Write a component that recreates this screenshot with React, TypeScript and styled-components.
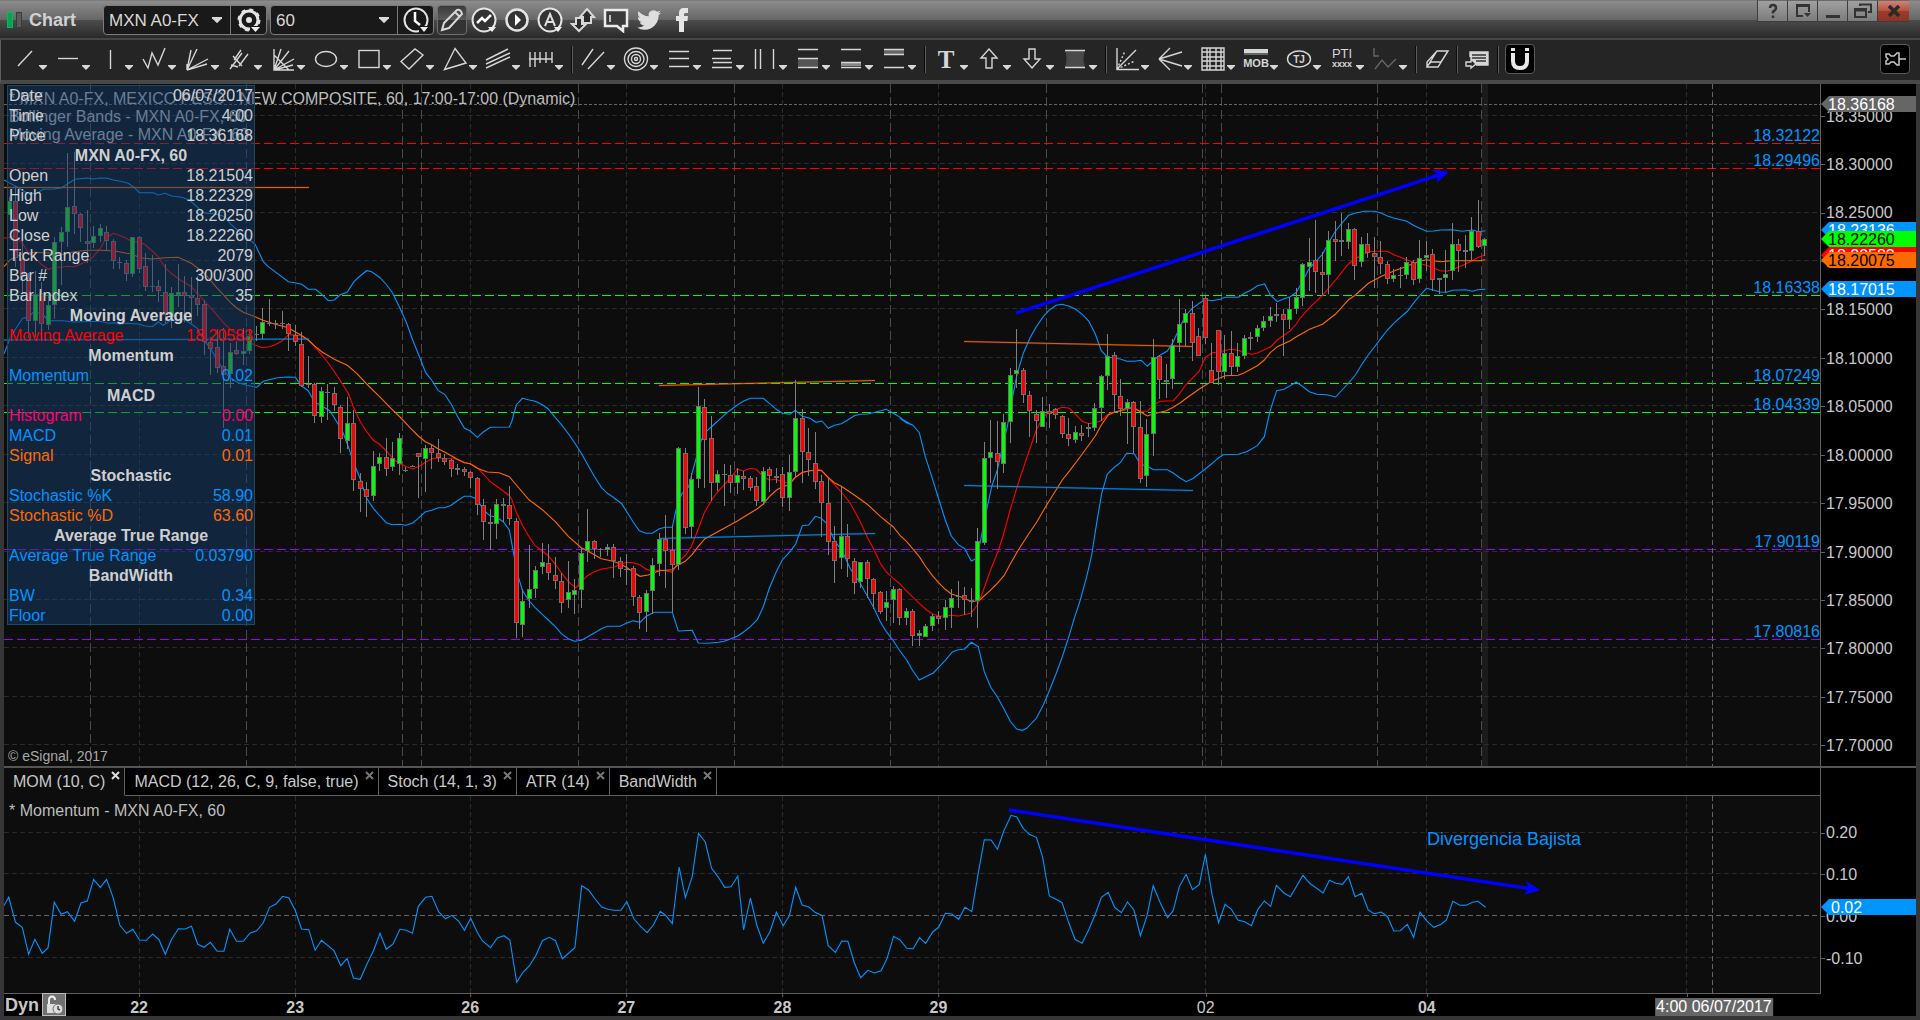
import React from 'react';
import styled, { createGlobalStyle, css } from 'styled-components';

const sans = '"Liberation Sans", Arial, sans-serif';

const GlobalStyle = createGlobalStyle`
  *, *::before, *::after { box-sizing: border-box; }
  html, body { margin: 0; background: #000; }
  body { font-family: ${sans}; font-size: 16px; line-height: 18px; color: #c8c8c8; overflow: hidden; }
  button, select { font-family: inherit; font-size: inherit; }
`;

/* ------------------------------------------------------------------ */
/* Price pane data                                                     */
/* ------------------------------------------------------------------ */

type Kind = 'g' | 'r' | 'd';
type Bar = [Kind, number, number, number, number];

interface Session {
  first: number;
  top: number;
  bars: string;
}

/* Each bar: kind, high, body top, body bottom, low, in thirds of a pixel below `top`. */
const sessions: Session[] = [
  {
    first: 0,
    top: 80,
    bars: `g350,362,406,406 r318,362,533,560 r480,534,590,640 r580,595,722,775 g573,642,722,770 r605,640,732,778
      g640,675,734,750 g470,486,674,718 g442,457,486,614 g218,381,456,501 r216,378,402,462 r398,402,444,487
      r390,483,491,549 g438,468,489,505 g432,444,468,485 r438,457,484,512 r476,484,543,566 d530,546,549,566
      r541,549,581,604 g470,471,581,590 r468,471,566,578 r520,558,620,633 d525,619,622,635 r600,618,632,665
      r552,636,705,733 g621,638,712,743 g553,636,646,680 r588,636,648,725 r592,645,654,728 r588,654,674,708
      r660,672,785,826 r772,785,806,884 r746,801,864,880 r745,858,885,1043 g788,816,882,925 r783,810,821,826
      g745,813,822,855 g746,768,812,822 d738,763,766,784 g684,726,762,776 d657,729,732,738 d720,728,732,746
      d694,728,732,748 r730,732,762,812 r735,765,786,798 r757,792,917,921 d828,911,914,924 r910,912,1007,1028
      g921,934,1010,1028 d912,935,938,1020 r920,940,974,992 r976,980,1076,1120 g950,1030,1082,1106
      r991,1030,1201,1232 r1180,1204,1228,1295 r1206,1226,1250,1310 g1112,1159,1249,1262 g1120,1132,1151,1172
      r1074,1132,1168,1187 g1087,1135,1162,1172 g1060,1075,1151,1185`,
  },
  {
    first: 61,
    top: 360,
    bars: `d320,331,334,336 d315,317,320,322 r278,280,290,413 g256,265,296,396 r252,265,278,327 r237,280,293,306
      r282,294,305,315 r298,300,326,350 d312,325,329,345 r320,327,336,348 r332,337,353,383 r350,355,434,464
      r418,435,486,540 d447,487,491,570 g418,432,491,537 d414,433,437,487 r378,435,477,495 r475,484,788,833
      g688,723,794,830 g556,688,717,743 g618,630,686,714 g549,606,621,642 r552,609,638,660 r591,645,662,687
      r640,663,728,758 g603,696,719,743 g657,690,704,762 g564,579,690,743 g447,543,572,606 r541,543,567,596
      d564,567,571,592 g552,561,570,588 r553,561,602,654 r590,603,626,651 d582,627,631,674 r618,625,710,738
      r705,711,759,807 g690,699,755,815 g595,615,692,761 g519,537,611,648 r465,537,572,684 r495,570,614,756
      g262,265,614,629 r264,279,503,522 g340,357,500,534 g82,139,356,384 r117,142,239,384 r168,235,368,422
      g330,343,368,392 d312,341,345,438 r315,346,368,399 g324,345,368,402 r334,349,356,390 r347,355,383,393
      r352,378,423,438 g322,333,426,435 r322,327,347,396 d324,349,353,369 r320,343,413,441 g284,337,413,453
      g60,175,335,350 r147,175,275,369 r205,277,299,347 r216,310,365,386 r346,363,428,530 r354,430,545,585
      r498,544,602,668 g378,528,593,627 r492,529,596,651 r595,603,668,702 g605,606,665,683 r600,606,656,714
      r655,657,701,747 r692,697,755,762 g693,726,743,783 g678,687,719,788 r684,688,773,795 g744,753,773,795
      r747,753,827,857 g810,820,827,857`,
  },
  {
    first: 141,
    top: 480,
    bars: `g432,438,470,472 g402,408,437,453 r394,408,416,432 g360,381,413,450 g327,354,384,444 d303,348,352,384
      r321,345,359,405 d324,361,365,411 g144,183,363,444`,
  },
  {
    first: 150,
    top: 240,
    bars: `g606,655,908,915 g540,637,654,729 r543,640,665,747 g522,547,671,698 g384,405,546,608 g267,390,402,444
      r385,391,464,489 r453,466,512,591 r510,522,543,608 g471,513,560,561 r492,514,521,564 r504,507,524,537
      r525,529,581,594 r534,583,597,618 g558,576,600,609 r555,580,587,603 d550,562,566,591 g489,505,563,573
      g404,408,503,542 g282,348,407,450 r336,346,464,518 r417,469,506,528 g477,487,506,612 r484,487,560,639
      r483,562,717,729 g537,583,707,741 g297,352,581,648 r345,349,419,477 d372,421,425,474 g297,316,416,447
      g177,253,308,335 g207,219,248,317 r183,220,308,363 r264,289,347,348 r168,175,293,312 r309,391,428,430
      r270,271,395,434 g285,340,395,416 r273,340,380,406 g309,349,380,395 g285,295,347,357 d276,292,296,330
      g255,265,290,306 g228,243,263,272 g201,229,242,261 d189,223,227,245 r207,222,239,348 g171,207,239,266
      g144,171,206,221 g69,72,173,197`,
  },
  {
    first: 200,
    top: 80,
    bars: `g474,546,560,633 r420,541,575,638 r517,576,584,645 g453,481,584,641 r423,478,486,543 d399,481,485,528
      g429,447,486,507 r444,447,557,600 g471,493,546,561 r459,493,518,533 r471,519,530,624 r483,531,551,582
      r543,552,597,612 g567,585,597,605 d560,585,589,624 g531,546,584,597 r541,546,599,614 g480,534,596,609
      g483,525,533,573 r507,522,599,633 d594,595,599,641 g510,582,593,638 g429,492,572,599 r477,492,513,576
      d465,511,515,564 g411,453,513,542 r360,454,500,504 g474,477,497,527`,
  },
];

const parseBars = (text: string): Bar[] =>
  text.trim().split(/\s+/).map((item) => {
    const [a, b, c, d] = item.slice(1).split(',').map(Number);
    return [item[0] as Kind, a, b, c, d];
  });

/* A piece of a curve: origin, x units per pixel, then x,y pairs (y in thirds of a pixel). */
type Piece = [number, number, number, string];

const toPoints = (pieces: Piece[]) =>
  pieces
    .map(([ox, oy, sx, pts]) =>
      pts
        .trim()
        .split(/\s+/)
        .map((p) => {
          const [x, y] = p.split(',').map(Number);
          return `${(ox + x / sx).toFixed(1)},${(oy + y / 3).toFixed(1)}`;
        })
        .join(' '),
    )
    .join(' ');

const upperBand: Piece[] = [
  [0, 80, 3, `12,300 50,320 85,342 110,340 130,328 160,327 184,324 202,312 225,298 260,294 280,297 301,294 322,295
    340,300 358,303 385,310 400,320 418,338 460,338 475,345 495,340 515,348 545,352 568,360 585,375 610,398 650,403
    675,410 690,430 725,462 765,492 790,545 805,560 865,605 885,608 905,613 925,628 947,628 965,643 985,662 1003,660
    1020,645 1042,636 1062,605 1080,588 1100,572 1115,575 1140,593 1160,615 1178,640 1200,685`],
  [400, 360, 3, `20,-110 38,-60 62,0 77,38 97,63 115,92 134,103 154,133 172,168 193,204 211,213 232,232 250,216
    271,202 328,201 335,185 349,135 367,115 388,120 406,124 427,134 445,147 466,173 484,193 505,221 523,247 544,280
    562,312 583,349 604,382 622,400 640,412 665,431 683,460 700,487 718,512 739,520 757,520 778,506 796,502 817,502
    828,450 845,402 856,390 866,380 876,340 887,300 904,240 920,213 937,198 962,175 985,155 1012,135 1030,124
    1051,115 1090,115 1108,130 1129,148 1147,160 1170,163 1186,151 1207,169 1230,175 1248,187 1266,183 1285,205
    1303,196 1324,191 1342,181 1363,167 1381,163 1402,162 1420,158 1459,148 1480,160 1498,170 1519,188 1537,195`],
  [900, 240, 3, `0,535 20,549 38,555 58,578 76,650 97,715 117,780 136,840 154,888 175,914 194,926 214,963 226,957
    240,910 262,800 275,740 292,690 310,610 322,560 340,460 352,400 370,340 391,292 409,260 430,230 448,210 469,196
    487,193 508,199 526,207 547,223 566,243 586,282 604,332 622,351 645,355 661,357 680,364 703,364 724,361 742,379
    758,363 781,345 802,333 820,305 840,260 859,224 877,205 898,190 916,179 937,182 960,178 976,172 1016,172
    1033,160 1054,150 1072,137 1094,132 1111,165 1132,185 1150,177 1171,170 1189,157 1210,120 1228,85 1250,62
    1268,42 1285,10`],
  [1300, 80, 2.529, `90,452 123,406 140,399 165,394 190,394 206,400 221,408 239,415 270,424 290,438 320,454 337,453
    355,450 386,449 410,454 436,450 452,455 469,452`],
];

const lowerBand: Piece[] = [
  [0, 80, 3, `12,822 30,775 48,745 68,715 85,712 100,697 125,700 145,722 190,722 220,726 300,724 325,730 345,728
    358,733 380,730 415,732 436,738 457,740 475,726 490,736 514,720 535,722 553,718 574,732 592,745 605,770 631,805
    652,840 670,870 690,893 715,908 740,916 770,922 790,904 828,894 860,891 886,892 905,918 925,932 943,965 970,980
    990,993 1010,1025 1030,1060 1045,1100 1060,1145 1080,1195 1100,1255 1120,1285 1140,1308 1159,1328 1177,1334`],
  [400, 360, 3, `0,493 18,496 38,489 55,475 75,456 95,451 115,443 134,443 154,436 172,422 193,409 211,409 232,418
    250,450 271,468 289,471 310,485 328,510 340,575 352,640 367,690 385,720 405,742 430,766 445,780 466,800 484,821
    505,836 523,844 544,841 562,831 583,819 604,806 622,799 660,799 680,789 700,782 720,787 739,769 762,757 817,757
    835,813 877,811 895,849 925,850 955,847 973,844 991,837 1012,829 1030,817 1051,800 1072,779 1090,740 1108,685
    1129,635 1147,600 1170,575 1187,552 1207,497 1226,495 1246,469 1262,474 1280,490 1303,540 1330,580 1350,625
    1381,670 1402,708 1420,740 1441,785 1459,815 1480,842 1498,870`],
  [900, 480, 3, `20,540 37,570 58,600 80,589 100,579 136,541 157,516 175,509 194,507 214,487 235,500 253,575 272,622
    292,650 310,683 331,724 350,747 367,751 380,745 409,715 430,675 445,640 469,580 487,530 505,475 523,415 541,360
    560,290 575,225 585,160 595,100 605,40`],
  [900, 240, 3, `622,702 645,680 661,668 680,640 703,641 721,673 742,678 760,689 802,689 820,699 840,714 859,725
    880,715 916,687 937,670 955,654 970,644 1015,643 1040,635 1072,617 1093,590 1111,510 1130,452 1152,448 1171,437
    1189,426 1210,441 1228,455 1250,463 1280,464`],
  [1300, 80, 2.529, `90,951 123,909 140,885 155,856 173,824 190,798 206,773 221,750 239,728 272,693 290,665 304,645
    320,625 337,630 355,636 370,637 386,631 419,629 436,634 450,629 469,628`],
];

const fastAverage: Piece[] = [
  [0, 80, 3, `12,475 48,468 67,490 85,517 106,535 124,553 145,568 163,562 184,562 202,559 223,560 241,553 263,543
    280,530 301,505 319,474 340,460 358,466 379,475 397,486 418,485 436,495 457,513 475,530 496,563 514,580 535,596
    553,607 574,620 592,640 613,663 640,692 670,728 691,748 709,760 730,773 748,787 765,795 787,803 808,800 826,794
    847,782 865,765 886,764 904,768 925,780 943,799 978,840 1000,870 1021,902 1045,940 1060,980 1081,1025 1100,1055
    1120,1081 1138,1092 1159,1113 1180,1137`],
  [400, 360, 3, `0,311 20,320 38,327 60,318 76,307 95,297 115,293 134,296 160,294 175,299 193,307 211,311 232,323
    250,342 271,365 289,378 310,393 328,407 335,418 349,457 367,495 388,532 406,557 427,573 445,587 466,613 484,638
    505,665 527,684 545,665 562,647 583,635 604,628 625,624 645,620 661,613 680,607 700,608 720,615 739,628 757,634
    780,630 800,633 817,637 835,605 856,587 874,560 890,520 913,458 934,422 952,397 973,374 991,355 1012,327
    1030,333 1051,325 1069,328 1090,350 1108,360 1129,358 1150,368 1168,368 1186,352 1207,338 1230,332 1255,328
    1266,333 1285,355 1303,373 1324,396 1350,428 1381,485 1402,532 1420,565 1441,610 1459,636 1480,655 1498,670`],
  [900, 480, 3, `19,332 37,350 58,370 80,390 97,401 115,408 136,408 154,406 175,408 193,404 214,399 232,375 245,345
    271,272 295,212 310,165 331,88 358,0`],
  [900, 240, 3, `385,640 409,570 430,530 448,517 469,508 487,502 508,505 526,522 547,544 566,551 590,547 604,542
    625,522 643,515 664,514 690,505 721,514 742,514 760,496 780,484 820,482 838,462 859,433 877,415 898,393 916,352
    937,338 960,335 990,328 1015,331 1033,337 1054,343 1072,339 1093,329 1111,321 1132,300 1150,287 1171,272
    1189,252`],
  [1300, 80, 2.529, `0,715 24,683 57,646 90,600 123,551 140,537 155,525 173,516 190,514 221,514 239,525 260,535
    287,547 320,556 337,563 355,572 370,574 386,569 403,560 419,552 452,532 469,524`],
];

const slowAverage: Piece[] = [
  [0, 80, 3, `12,560 30,540 48,531 67,521 106,517 124,518 163,520 184,524 223,515 263,511 301,511 345,513 379,520
    397,522 418,533 457,537 496,533 535,532 553,540 574,550 592,563 613,580 631,600 652,625 670,644 691,667 709,683
    730,697 765,710 787,720 826,733 865,743 886,756 904,766 925,780 943,797 965,815 1003,838 1042,856 1070,880
    1100,912 1138,949 1170,982`],
  [400, 360, 3, `0,171 30,203 55,228 76,245 95,254 115,267 134,276 154,287 172,298 193,308 211,311 232,325 262,336
    298,338 328,350 349,375 388,420 427,449 466,485 505,529 544,563 562,572 583,584 604,596 640,604 661,612 679,622
    700,636 720,649 745,645 778,632 817,629 835,614 856,604 877,583 895,559 915,536 952,516 1012,483 1051,459
    1072,446 1090,432 1108,410 1129,391 1147,380 1168,374 1186,352 1207,337 1230,332 1264,331 1285,352 1303,368
    1324,379 1363,405 1402,433 1441,469 1480,501`],
  [900, 480, 3, `0,166 20,185 58,230 76,258 97,286 115,307 136,328 154,342 175,348 193,355 217,366 240,359 271,331
    290,312 312,287 331,252 355,210 388,159 409,128 442,72 487,0`],
  [900, 240, 3, `509,692 547,642 586,588 604,555 625,525 643,517 664,511 682,504 703,503 721,515 742,528 760,522
    799,512 820,502 840,489 859,475 898,447 937,423 976,407 1015,406 1033,398 1072,377 1093,360 1111,338 1132,320
    1171,302 1189,290`],
  [1300, 80, 2.529, `0,764 24,748 57,733 90,702 123,659 140,645 173,610 206,589 239,572 272,558 287,550 304,543
    320,539 355,545 386,542 453,542 469,539`],
];

const momentum: Piece[] = [
  [0, 740, 2.063, `8,497 18,472 32,547 46,562 59,643 72,598 87,640 99,624 112,487 126,523 139,515 154,544 167,489
    180,483 193,418 207,442 220,418 234,475 247,555 261,580 274,568 288,600 302,601 315,582 328,599 341,643 354,598
    368,566 382,567 395,559 408,613 421,622 434,607 448,634 462,634 474,568 488,604 502,604 516,579 529,573 543,549
    556,502 570,491 583,469 596,474 609,511 622,567 637,569 650,631 663,601 689,632 703,677 716,655 729,714 743,718
    757,673 771,631 784,580 797,628 811,612 825,568 838,571 851,580 863,499 878,472 891,469 905,516 919,536 932,526
    946,543 958,571 971,535 985,578 995,602 1012,623 1026,594 1040,587 1052,600 1066,727 1079,697 1092,678 1105,648
    1119,602 1133,592 1146,602 1160,656 1186,623 1200,437 1214,450 1228,477 1241,501 1254,508 1267,511 1281,511
    1293,485 1308,537 1322,560 1335,578 1348,555 1362,514 1374,527 1387,551 1401,381 1414,473 1428,410 1441,280
    1455,306 1468,385 1482,412 1495,442 1508,440 1522,408 1534,570`],
  [740, 740, 2.8, `29,474 47,555 65,610 84,575 102,517 121,557 138,527 156,442 174,495 193,501 210,517 230,527
    247,617 267,637 285,603 302,604 320,668 338,713 358,691 376,699 395,692 412,655 430,589 448,600 467,625 485,626
    503,593 520,610 540,575 556,562 575,520 593,522 612,538 630,502 649,515 667,400 684,299 703,300 721,328 739,272
    759,226 775,231 793,265 810,283 830,292 847,350 866,468 885,478 902,488 920,547 938,598 958,610 976,570 994,525
    1012,472 1031,457 1049,502 1068,518 1085,486 1103,510 1121,587 1139,530 1157,437 1176,487 1197,533 1213,512
    1230,440 1249,403 1267,449 1286,434 1303,343 1322,465 1340,548 1358,493 1376,508 1394,540 1413,545 1432,557
    1450,508 1468,483 1486,499 1502,436 1523,459 1541,470`],
  [1260, 740, 2.376, `102,406 118,430 150,459 165,421 180,430 196,433 210,410 226,470 242,460 257,510 271,521
    288,516 303,530 318,573 333,572 350,553 365,592 380,517 398,545 413,562 430,553 443,540 458,484 475,496 490,496
    505,487 518,484 536,502`],
];

const plot = { left: 4, width: 1816, priceTop: 84, priceHeight: 682, momTop: 796, momHeight: 197 };

const priceTicks = [115, 163, 212, 260, 308, 357, 405, 454, 502, 551, 599, 647, 696, 744].map((y, i) => ({
  y,
  text: (18.35 - i * 0.05).toFixed(5),
}));
const momentumTicks = [
  { y: 832, text: '0.20' },
  { y: 873, text: '0.10' },
  { y: 915, text: '0.00' },
  { y: 957, text: '-0.10' },
];
const days = [
  { x: 139, text: '22' },
  { x: 295, text: '23' },
  { x: 470, text: '26' },
  { x: 626, text: '27' },
  { x: 782, text: '28' },
  { x: 938, text: '29' },
  { x: 1205, text: '02', light: true },
  { x: 1426, text: '04' },
  { x: 1686, text: '' },
];
const sessionBreaks = [90, 246, 402, 421, 578, 734, 890, 1046, 1202, 1221, 1377, 1481];
const crosshair = { x: 1712, y: 104 };

const levels = [
  { y: 143, text: '18.32122', color: '#ff0000' },
  { y: 168, text: '18.29496', color: '#ff0000' },
  { y: 295, text: '18.16338', color: '#00ff00' },
  { y: 383, text: '18.07249', color: '#00ff00' },
  { y: 412, text: '18.04339', color: '#00ff00' },
  { y: 549, text: '17.90119', color: '#9a00ff' },
  { y: 639, text: '17.80816', color: '#9a00ff' },
];

const priceTags = [
  { y: 104, text: '18.36168', bg: '#666666', fg: '#ffffff' },
  { y: 230, text: '18.23136', bg: '#0094ff', fg: '#ffffff' },
  { y: 255, text: '18.20583', bg: '#ff0000', fg: '#ffffff' },
  { y: 239, text: '18.22260', bg: '#00ff00', fg: '#000000' },
  { y: 260, text: '18.20075', bg: '#ff6a00', fg: '#000000' },
  { y: 289, text: '18.17015', bg: '#0094ff', fg: '#ffffff' },
];

const blue = '#0094ff';
const orange = '#ff6a00';
const readings: { label: string; value?: string; color?: string }[] = [
  { label: 'Date', value: '06/07/2017' },
  { label: 'Time', value: '4:00' },
  { label: 'Price', value: '18.36168' },
  { label: 'MXN A0-FX, 60' },
  { label: 'Open', value: '18.21504' },
  { label: 'High', value: '18.22329' },
  { label: 'Low', value: '18.20250' },
  { label: 'Close', value: '18.22260' },
  { label: 'Tick Range', value: '2079' },
  { label: 'Bar #', value: '300/300' },
  { label: 'Bar Index', value: '35' },
  { label: 'Moving Average' },
  { label: 'Moving Average', value: '18.20583', color: '#ff0000' },
  { label: 'Momentum' },
  { label: 'Momentum', value: '0.02', color: blue },
  { label: 'MACD' },
  { label: 'Histogram', value: '0.00', color: '#ff006e' },
  { label: 'MACD', value: '0.01', color: blue },
  { label: 'Signal', value: '0.01', color: orange },
  { label: 'Stochastic' },
  { label: 'Stochastic %K', value: '58.90', color: blue },
  { label: 'Stochastic %D', value: '63.60', color: orange },
  { label: 'Average True Range' },
  { label: 'Average True Range', value: '0.03790', color: blue },
  { label: 'BandWidth' },
  { label: 'BW', value: '0.34', color: blue },
  { label: 'Floor', value: '0.00', color: blue },
];

/* ------------------------------------------------------------------ */
/* Styled parts                                                        */
/* ------------------------------------------------------------------ */

const Window = styled.div`
  display: flex;
  flex-direction: column;
  height: 100vh;
  min-height: 600px;
  background: #000;
`;

const TitleBar = styled.header`
  display: flex;
  align-items: flex-start;
  height: 40px;
  flex: none;
  padding-left: 7px;
  padding-right: 11px;
  border-bottom: 2px solid #454545;
  background: linear-gradient(#6a6a6a 0, #8c8c8c 1px, #666 20px, #4c4c4c 20px, #292929 38px);
`;

const Brand = styled.h1`
  display: flex;
  align-items: center;
  gap: 7px;
  width: 96px;
  height: 40px;
  margin: 0;
  font-size: 18px;
  line-height: 20px;
  color: #d2d2d2;
`;

const Field = styled.div<{ $width: number }>`
  display: flex;
  width: ${(p) => p.$width}px;
  height: 30px;
  margin: 5px 3px 0 0;
  border: 1px solid #7b7b7b;
  border-radius: 4px;
  background: #191919;
`;

const Picker = styled.label`
  position: relative;
  display: flex;
  flex: 1;
  align-items: center;

  svg {
    position: absolute;
    right: 8px;
    pointer-events: none;
  }
`;

const Select = styled.select`
  appearance: none;
  width: 100%;
  height: 28px;
  padding: 0 24px 0 5px;
  border: 0;
  background: transparent;
  color: #d8d8d8;
  font-size: 17px;
`;

const FieldButton = styled.button`
  display: flex;
  align-items: center;
  justify-content: center;
  width: 36px;
  padding: 0;
  border: 0;
  border-left: 1px solid #7b7b7b;
  background: transparent;
`;

const TitleButton = styled.button<{ $pressed?: boolean }>`
  display: flex;
  align-items: center;
  justify-content: center;
  width: ${(p) => (p.$pressed ? 30 : 33)}px;
  height: 30px;
  margin-top: 5px;
  padding: 0;
  border: 1px solid ${(p) => (p.$pressed ? '#6e6e6e' : 'transparent')};
  border-radius: 4px;
  background: ${(p) => (p.$pressed ? 'linear-gradient(#3a3a3a, #5a5a5a 50%, #333 50%)' : 'transparent')};
`;

const Spacer = styled.div`
  flex: 1;
`;

const WindowButton = styled.button<{ $close?: boolean }>`
  display: flex;
  align-items: center;
  justify-content: center;
  width: ${(p) => (p.$close ? 32 : 30)}px;
  height: 22px;
  padding: 0;
  border: 1px solid #3c3c3c;
  border-top-color: #6a6a6a;
  border-right-width: 0;
  background: ${(p) =>
    p.$close ? 'linear-gradient(#cf8476, #b5503f 50%, #a33a28 50%, #8a3426)' : 'linear-gradient(#a0a0a0, #7c7c7c)'};
`;

const Toolbar = styled.div`
  display: flex;
  align-items: center;
  flex: none;
  height: 44px;
  padding: 0 10px 2px;
  border-left: 1px solid #606060;
  border-bottom: 4px solid #494949;
  background: #252525;
`;

const Tool = styled.button<{ $compact?: boolean }>`
  display: flex;
  align-items: center;
  flex: none;
  width: ${(p) => (p.$compact ? 32 : 43)}px;
  height: 32px;
  padding: 0;
  border: 0;
  background: transparent;
`;

const Divider = styled.span`
  flex: none;
  width: 2px;
  height: 27px;
  margin: 0 6px 0 1px;
  border-left: 1px solid #0c0c0c;
  border-right: 1px solid #5c5c5c;
`;

const BoxedTool = styled.button`
  display: flex;
  align-items: center;
  justify-content: center;
  flex: none;
  width: 30px;
  height: 30px;
  padding: 0;
  border: 1px solid #5a5a5a;
  border-radius: 4px;
  background: #000;
`;

const Workspace = styled.main`
  display: flex;
  flex: 1;
  flex-direction: column;
  min-height: 0;
  border: 4px solid #363636;
  border-top: 0;
`;

const Pane = styled.section<{ $grow: number }>`
  display: flex;
  flex: ${(p) => p.$grow} 1 0;
  min-height: 0;
`;

const Plot = styled.div`
  position: relative;
  flex: 1;
  min-width: 0;
  background: #0d0d0d;
  overflow: hidden;
`;

const Canvas = styled.svg`
  display: block;
  width: 100%;
  height: 100%;
`;

const Axis = styled.div`
  position: relative;
  flex: none;
  width: 96px;
  border-left: 1px solid #606060;
  background: #000;
  overflow: hidden;
`;

const AxisLabel = styled.span`
  position: absolute;
  left: 0;
  display: flex;
  align-items: center;
  height: 18px;
  margin-top: -8px;
  padding-top: 1px;
  color: #c8c8c8;

  &::before {
    content: '';
    width: 4px;
    height: 1px;
    margin-right: 1px;
    background: #606060;
  }
`;

const AxisTag = styled.span<{ $bg: string; $fg: string; $wide?: boolean }>`
  position: absolute;
  left: 0;
  right: 0;
  height: 16px;
  margin-top: -8px;
  padding-left: ${(p) => (p.$wide ? 10 : 7)}px;
  line-height: 17px;
  clip-path: polygon(0 50%, 8px 0, 100% 0, 100% 100%, 8px 100%);
  background: ${(p) => p.$bg};
  color: ${(p) => p.$fg};
`;

const LevelLabel = styled.span`
  position: absolute;
  right: 0;
  height: 18px;
  margin-top: -16px;
  color: ${blue};
`;

const Studies = styled.ul`
  position: absolute;
  top: 6px;
  left: 5px;
  margin: 0;
  padding: 0;
  list-style: none;
  white-space: nowrap;
  color: #bdbdbd;
`;

const Copyright = styled.small`
  position: absolute;
  bottom: 2px;
  left: 4px;
  font-size: 14px;
  line-height: 16px;
  color: #a8a8a8;
`;

const DataWindow = styled.dl`
  position: absolute;
  top: 1px;
  left: 3px;
  width: 248px;
  margin: 0;
  border: 1px solid #1f4a5e;
  background: rgba(21, 61, 109, 0.5);
`;

const Reading = styled.div<{ $color?: string; $heading?: boolean }>`
  display: flex;
  justify-content: ${(p) => (p.$heading ? 'center' : 'space-between')};
  height: 20px;
  padding: 0 1px;
  line-height: 20px;
  color: ${(p) => p.$color ?? '#cfcfcf'};
  ${(p) =>
    p.$heading &&
    css`
      font-weight: bold;
    `}

  &:last-child {
    height: 18px;
  }

  dd {
    margin: 0;
  }
`;

const PaneDivider = styled.div`
  flex: none;
  height: 2px;
  background: #555;
`;

const TabStrip = styled.div`
  display: flex;
  flex: none;
  height: 28px;
  background: #000;
`;

const Tabs = styled.div`
  display: flex;
  flex: 1;
  border-right: 1px solid #606060;
`;

const TabRest = styled.div`
  flex: 1;
  border-bottom: 1px solid #606060;
`;

const TabCorner = styled.div`
  width: 95px;
`;

const Tab = styled.div<{ $active?: boolean }>`
  display: flex;
  gap: 6px;
  padding: 0 4px 0 9px;
  border-right: 1px solid #606060;
  border-bottom: 1px solid ${(p) => (p.$active ? '#0d0d0d' : '#606060')};
  background: ${(p) => (p.$active ? '#0d0d0d' : '#000')};
`;

const TabButton = styled.button`
  padding: 1px 0 0;
  border: 0;
  background: transparent;
  color: #c8c8c8;
  white-space: nowrap;
`;

const CloseTab = styled.button`
  width: 9px;
  height: 9px;
  margin-top: 3px;
  padding: 0;
  border: 0;
  background: transparent;

  svg {
    display: block;
  }
`;

const Annotation = styled.span`
  position: absolute;
  font-size: 18px;
  line-height: 20px;
  white-space: nowrap;
  color: ${blue};
`;

const TimeRow = styled.footer`
  display: flex;
  flex: none;
  height: 23px;
  background: #000;
`;

const TimeScale = styled.div`
  position: relative;
  flex: 1;
  border-top: 1px solid #606060;
`;

const TimeLabel = styled.span<{ $light?: boolean }>`
  position: absolute;
  top: 0;
  padding-top: 5px;
  transform: translateX(-50%);
  font-weight: ${(p) => (p.$light ? 'normal' : 'bold')};
  line-height: 18px;

  &::before {
    content: '';
    position: absolute;
    top: 0;
    left: 50%;
    width: 1px;
    height: 3px;
    background: #606060;
  }
`;

const TimeTag = styled.span`
  position: absolute;
  top: 4px;
  height: 18px;
  padding: 0 1px;
  transform: translateX(-50%);
  background: #666;
  color: #fff;
  white-space: nowrap;
`;

const Mode = styled.div`
  position: absolute;
  top: -1px;
  left: 1px;
  display: flex;
  gap: 3px;
  font-size: 18px;
  font-weight: bold;
  line-height: 24px;
`;

const LockButton = styled.button`
  width: 24px;
  height: 23px;
  padding: 0;
  border: 1px solid #bbb;
  background: #707070;

  svg {
    display: block;
  }
`;

/* ------------------------------------------------------------------ */
/* Icons                                                               */
/* ------------------------------------------------------------------ */

const Caret = ({ size = 8 }: { size?: number }) => (
  <svg width={size} height={size * 0.625} viewBox="0 0 8 5" aria-hidden="true">
    <path d="M0 0H8V1L4 5 0 1Z" fill="#d8d8d8" />
  </svg>
);

const ToolCaret = styled.span`
  display: flex;
  margin-top: 17px;
`;

const Glyph = ({ children }: { children: React.ReactNode }) => (
  <svg width="28" height="28" viewBox="0 0 28 28" fill="none" stroke="#d6d6d6" strokeWidth="1.4" aria-hidden="true">
    {children}
  </svg>
);

const tiny = { fill: '#d6d6d6', stroke: 'none', fontFamily: sans, textAnchor: 'middle' as const };

const toolGroups: [string, React.ReactNode][][] = [
  [
    ['Line', <path d="M7 21 21 6" />],
    ['Horizontal line', <path d="M4 13.5H24" />],
    ['Vertical line', <path d="M13.5 5V24" />],
    ['Zigzag', <path d="M3 14 8 23 12 8 18 20 25 3" />],
    ['Fan', <path d="M4 25 8 5M4 25 14 4M4 25 25 14M4 25 24 19M4 25V19" />],
    ['Pitchfork', <path d="M4 24 16 8M7 11 16 21M8 15 15 5M13 21 22 9M5 20l7 2" />],
    ['Gann fan', <path d="M5 4V25H25M5 25 12 4M5 25 20 6M5 25 25 14M5 25 24 20M5 10 20 25" />],
    ['Ellipse', <ellipse cx="14" cy="14" rx="10.5" ry="7.5" />],
    ['Rectangle', <rect x="4" y="5.5" width="20" height="17" />],
    ['Diamond', <path d="M3 16.5 17 4 25 10 11 24Z" />],
    ['Triangle', <path d="M14 3.5 25 18 3.5 24.5Z" />],
    ['Parallel channel', <path d="M2 15 24 4M2 19 26 8M2 23 26 12" />],
    ['Time cycles', <path d="M3 7V22M8 7V22M13 7V18M19 7V18M25 7V18M2 14H25" />],
  ],
  [
    ['Parallel lines', <path d="M3 20 14 4M9 24 25 7" />],
    [
      'Fibonacci circles',
      <>
        <ellipse cx="14" cy="14" rx="11.5" ry="11" />
        <ellipse cx="14" cy="14" rx="8" ry="7.5" />
        <ellipse cx="14" cy="14" rx="4.5" ry="4.5" />
        <ellipse cx="14" cy="14" rx="1.5" ry="1.5" />
      </>,
    ],
    ['Retracement', <path d="M4 6.5H24M4 13.5H24M4 21.5H24" />],
    ['Extension', <path d="M5 5.5H24M4 13.5H23M5 17.5H24M4 22.5H24" />],
    ['Time zones', <path d="M4.5 4V24M9.5 4V24M22.5 4V24" />],
    ['Level one', <><path d="M4 14H24V23H4Z" fill="#555" stroke="none" /><path d="M4 4.5H24M4 13.5H24M4 22.5H24" /></>],
    ['Level two', <><path d="M4 17H24V21H4Z" fill="#888" stroke="none" /><path d="M4 4.5H24M4 17.5H24M4 22.5H24" /></>],
    ['Level three', <><path d="M4 5H24V9H4Z" fill="#666" stroke="none" /><path d="M4 4.5H24M4 9.5H24M4 22.5H24" /></>],
  ],
  [
    ['Text', <text x="14" y="23" fontSize="25" fill="#d6d6d6" stroke="none" textAnchor="middle" fontWeight="bold" fontFamily='"Liberation Serif", serif'>T</text>],
    ['Arrow up', <path d="M14 4 22 13H17V23H11V13H6Z" />],
    ['Arrow down', <path d="M14 23 22 14H17V4H11V14H6Z" />],
    ['Box', <><path d="M4 5.5H24Q21 14 24 22.5H4Q7 14 4 5.5Z" fill="#4a4a4a" stroke="none" /><path d="M4 5.5H24M4 22.5H24" /></>],
  ],
  [
    ['Speed lines', <><path d="M4 3V24.5H26M4 24 23 5" /><path d="M4 24 12 6M4 24 22 16" strokeDasharray="2 2" /></>],
    ['Rays', <path d="M3 14 14 3M3 14 26 7M3 14 26 21M3 14 14 25" />],
    ['Grid', <path d="M3 3H25V25H3ZM8 3V25M11 3V25M17 3V25M22 3V25M3 7H25M3 12H25M3 16H25M3 21H25" />],
    ['MOB', <><path d="M2 4H26V8H2Z" fill="#d6d6d6" stroke="none" /><path d="M2 8H26V10H2Z" fill="#666" stroke="none" /><text x="14" y="22" fontSize="11" fontWeight="bold" {...tiny}>MOB</text></>],
    ['TJ', <><ellipse cx="14" cy="14" rx="11.5" ry="8" /><text x="14" y="18" fontSize="10" fontWeight="bold" {...tiny}>TJ</text></>],
    ['PTI', <><text x="14" y="13" fontSize="13" {...tiny}>PTI</text><text x="14" y="22" fontSize="9" fontWeight="bold" {...tiny}>xxxx</text></>],
    ['Label', <g stroke="#666"><path d="M3 3V11H8M4 24 11 15 17 22 25 14" /></g>],
  ],
];

const Drawings = ({ top, height, children }: { top: number; height: number; children: React.ReactNode }) => (
  <Canvas viewBox={`${plot.left} ${top} ${plot.width} ${height}`} preserveAspectRatio="none" aria-hidden="true">
    {children}
  </Canvas>
);

const Rule = ({ x, y, ...rest }: { x?: number; y?: number } & React.SVGProps<SVGPathElement>) => (
  <path
    d={x !== undefined ? `M${x + 0.5} ${plot.priceTop}V${plot.momTop + plot.momHeight}` : `M4 ${(y ?? 0) + 0.5}H1820`}
    fill="none"
    shapeRendering="crispEdges"
    {...rest}
  />
);

const TrendLine = ({ d, color }: { d: string; color: string }) => (
  <g fill="none" stroke={color}>
    <path d={d} strokeWidth="2" opacity="0.25" />
    <path d={d} opacity="0.85" />
  </g>
);

const Arrow = ({ x1, y1, x2, y2 }: { x1: number; y1: number; x2: number; y2: number }) => {
  const angle = (Math.atan2(y2 - y1, x2 - x1) * 180) / Math.PI;
  return (
    <g stroke="#0000ff" fill="#0000ff">
      <path d={`M${x1} ${y1}L${x2 - 4} ${y2 - ((y2 - y1) / (x2 - x1)) * 4}`} strokeWidth="3.5" />
      <path d="M0 0L-13-6-10 0-13 6Z" transform={`translate(${x2} ${y2}) rotate(${angle})`} />
    </g>
  );
};

const Candles = () => (
  <g shapeRendering="crispEdges">
    {sessions.flatMap(({ first, top, bars }) =>
      parseBars(bars).map(([kind, hi, bodyTop, bodyBottom, lo], i) => {
        const x = Math.floor(9 + 6.5 * (first + i));
        const y = (v: number) => Math.round(top + v / 3);
        const bt = y(bodyTop);
        const bb = Math.max(y(bodyBottom), bt + 1);
        return (
          <g key={first + i}>
            <rect x={x} y={y(hi)} width={1} height={Math.max(1, y(lo) - y(hi))} fill="#808080" />
            <rect x={x - 2} y={bt} width={5} height={bb - bt} fill="#707070" />
            {kind !== 'd' && (
              <rect x={x - 1} y={bt + 1} width={3} height={Math.max(1, bb - bt - 2)} fill={kind === 'g' ? '#00ff00' : '#ff0000'} />
            )}
          </g>
        );
      }),
    )}
  </g>
);

const pct = (value: number, origin: number, size: number) => `${((value - origin) / size) * 100}%`;

export default function App() {
  const line = { fill: 'none', strokeWidth: 1.1 };
  return (
    <Window>
      <GlobalStyle />
      <TitleBar>
        <Brand>
          <svg width="15" height="18" viewBox="0 0 15 18" aria-hidden="true">
            <rect x="0.5" y="1.5" width="5" height="15" fill="#00a550" stroke="#12b060" />
            <rect x="9.5" y="1.5" width="5" height="15" fill="#5a5a5a" stroke="#3a3a3a" />
          </svg>
          Chart
        </Brand>
        <Field $width={164}>
          <Picker>
            <Select aria-label="Symbol" defaultValue="MXN A0-FX">
              <option>MXN A0-FX</option>
            </Select>
            <Caret size={10} />
          </Picker>
          <FieldButton aria-label="Symbol settings">
            <svg width="26" height="26" viewBox="0 0 26 26" fill="none" aria-hidden="true">
              <circle cx="13" cy="13" r="9" stroke="#e4e4e4" strokeWidth="3" />
              <circle cx="13" cy="13" r="10.5" stroke="#e4e4e4" strokeWidth="2" strokeDasharray="4 4.25" />
              <circle cx="13" cy="13" r="3" fill="#e4e4e4" />
              <path d="M14 19H25V26H14Z" fill="#191919" />
              <path d="M15 20H24L19.5 25Z" fill="#f0f0f0" />
            </svg>
          </FieldButton>
        </Field>
        <Field $width={164}>
          <Picker>
            <Select aria-label="Interval" defaultValue="60">
              <option>60</option>
            </Select>
            <Caret size={10} />
          </Picker>
          <FieldButton aria-label="Time template">
            <svg width="26" height="26" viewBox="0 0 26 26" fill="none" aria-hidden="true">
              <circle cx="13" cy="13" r="11.5" stroke="#e4e4e4" strokeWidth="2" />
              <path d="M12 5V14L17 18" stroke="#fff" strokeWidth="2.5" />
              <path d="M16 19H26V26H16Z" fill="#191919" />
              <path d="M17 20H25L21 25Z" fill="#f0f0f0" />
            </svg>
          </FieldButton>
        </Field>
        <TitleButton $pressed aria-label="Drawing tools">
          <svg width="26" height="26" viewBox="0 0 26 26" fill="none" stroke="#d8d8d8" strokeWidth="2" aria-hidden="true">
            <path d="M3 23 5 16 18 3Q22 2 23 7L10 21ZM16 5 21 10" />
          </svg>
        </TitleButton>
        <TitleButton aria-label="Studies">
          <svg width="26" height="26" viewBox="0 0 26 26" fill="none" aria-hidden="true">
            <circle cx="13" cy="13" r="11.5" stroke="#e4e4e4" strokeWidth="2" fill="#333" />
            <path d="M6 16 11 11 14 14 20 8" stroke="#fff" strokeWidth="2.5" />
            <path d="M17 20H25L21 25Z" fill="#f0f0f0" />
          </svg>
        </TitleButton>
        <TitleButton aria-label="Play">
          <svg width="26" height="26" viewBox="0 0 26 26" fill="none" aria-hidden="true">
            <circle cx="13" cy="13" r="10.5" stroke="#e4e4e4" strokeWidth="2.5" fill="#333" />
            <path d="M11 7 17 13 11 19Z" fill="#fff" />
          </svg>
        </TitleButton>
        <TitleButton aria-label="Alerts">
          <svg width="26" height="26" viewBox="0 0 26 26" fill="none" aria-hidden="true">
            <circle cx="13" cy="13" r="11.5" stroke="#e4e4e4" strokeWidth="2" fill="#333" />
            <path d="M8 19 13 7 18 19M10 15H16" stroke="#ddd" strokeWidth="2" />
            <path d="M17 20H25L21 25Z" fill="#f0f0f0" />
          </svg>
        </TitleButton>
        <TitleButton aria-label="Trade">
          <svg width="26" height="26" viewBox="0 0 26 26" fill="#2b2b2b" stroke="#d8d8d8" strokeWidth="2" aria-hidden="true">
            <path d="M17 2 24 10H21V16H13V10H10Z" />
            <path d="M6 11H12V17H16L9 24 2 17H6Z" />
          </svg>
        </TitleButton>
        <TitleButton aria-label="Notes">
          <svg width="26" height="26" viewBox="0 0 26 26" fill="#3a3a3a" stroke="#ececec" strokeWidth="2.5" aria-hidden="true">
            <path d="M2 3H24V19H20V24L14 19H2Z" />
            <path d="M7 8V15" strokeWidth="1.5" />
          </svg>
        </TitleButton>
        <TitleButton aria-label="Twitter">
          <svg width="24" height="24" viewBox="0 0 24 24" fill="#dedede" aria-hidden="true">
            <path d="M23.95 4.57a10 10 0 01-2.82.77 4.96 4.96 0 002.16-2.72c-.95.56-2 .96-3.13 1.18a4.92 4.92 0 00-8.38 4.48C7.69 8.09 4.07 6.13 1.64 3.16a4.82 4.82 0 00-.67 2.48c0 1.71.87 3.21 2.19 4.1a4.9 4.9 0 01-2.23-.62v.06a4.92 4.92 0 003.95 4.83 5 5 0 01-2.21.08 4.94 4.94 0 004.6 3.42A9.87 9.87 0 010 19.54a13.99 13.99 0 007.56 2.21c9.05 0 14-7.5 14-13.98 0-.21 0-.42-.02-.63a9.94 9.94 0 002.46-2.55z" />
          </svg>
        </TitleButton>
        <TitleButton aria-label="Facebook">
          <svg width="24" height="26" viewBox="0 0 24 26" fill="#e6e6e6" aria-hidden="true">
            <path d="M9 25V14H6V9H9V6Q9 1 14 1H18V6H15Q14 6 14 7.5V9H18L17.5 14H14V25Z" />
          </svg>
        </TitleButton>
        <Spacer />
        <WindowButton aria-label="Help">
          <svg width="14" height="16" viewBox="0 0 14 16" fill="none" stroke="#333" strokeWidth="2.5" aria-hidden="true">
            <path d="M4 5Q4 2 7 2T10 5Q10 7 7 8.5V10.5M7 12.5V15" />
          </svg>
        </WindowButton>
        <WindowButton aria-label="Dock">
          <svg width="16" height="16" viewBox="0 0 16 16" fill="none" stroke="#333" strokeWidth="2" aria-hidden="true">
            <path d="M14 9V2H2V13H8M2 3H14" />
            <path d="M9 10H16L12.5 14Z" fill="#333" stroke="none" />
          </svg>
        </WindowButton>
        <WindowButton aria-label="Minimize">
          <svg width="16" height="16" viewBox="0 0 16 16" aria-hidden="true">
            <path d="M1 12H15V15H1Z" fill="#333" />
          </svg>
        </WindowButton>
        <WindowButton aria-label="Restore">
          <svg width="18" height="16" viewBox="0 0 18 16" fill="none" stroke="#333" strokeWidth="2" aria-hidden="true">
            <path d="M1 6H12V14H1ZM1 7.5H12M6 3V1.5H17V9H14" />
          </svg>
        </WindowButton>
        <WindowButton $close aria-label="Close">
          <svg width="14" height="12" viewBox="0 0 14 12" stroke="#2a2a2a" strokeWidth="3.5" aria-hidden="true">
            <path d="M2 1 12 11M12 1 2 11" />
          </svg>
        </WindowButton>
      </TitleBar>

      <Toolbar role="toolbar" aria-label="Drawing">
        {toolGroups.map((group, g) => (
          <React.Fragment key={g}>
            {group.map(([name, drawing]) => (
              <Tool key={name} aria-label={name}>
                <Glyph>{drawing}</Glyph>
                <ToolCaret>
                  <Caret />
                </ToolCaret>
              </Tool>
            ))}
            <Divider />
          </React.Fragment>
        ))}
        <Tool $compact aria-label="Eraser">
          <Glyph>
            <path d="M4 22 14 6H25L15 22ZM4 22V17L14 6M8 17H18L15 22M18 17 25 6M8 17 4 21" />
          </Glyph>
        </Tool>
        <Divider />
        <Tool $compact aria-label="Line list">
          <Glyph>
            <path d="M6 12V7H24V20H12" fill="#d6d6d6" />
            <path d="M8 10H22M8 13H22M12 16H22" stroke="#333" />
            <path d="M2 17H7V14L12 19 7 23V21H2Z" fill="#252525" />
          </Glyph>
        </Tool>
        <Divider />
        <BoxedTool aria-label="Magnet">
          <svg width="24" height="26" viewBox="0 0 24 26" fill="none" stroke="#e8e8e8" strokeWidth="4" aria-hidden="true">
            <path d="M5 7V15Q5 22 12 22T19 15V7M5 2V5M19 2V5" />
          </svg>
        </BoxedTool>
        <Spacer />
        <BoxedTool aria-label="Pin">
          <svg width="24" height="20" viewBox="0 0 24 20" fill="none" stroke="#c8c8c8" strokeWidth="1.5" aria-hidden="true">
            <path d="M3 5H6L8 7H11L14 4H16V16H14L11 13H8L6 15H3V12L5 10 3 8ZM16 10H23" />
          </svg>
        </BoxedTool>
      </Toolbar>

      <Workspace>
        <Pane $grow={plot.priceHeight} aria-label="Price chart">
          <Plot>
            <Drawings top={plot.priceTop} height={plot.priceHeight}>
              <rect x="1482" y="84" width="6" height="682" fill="#1b1b1b" />
              {priceTicks.map(({ y }) => (
                <Rule key={y} y={y} stroke="#2c2c2c" strokeDasharray="5 3" />
              ))}
              {days.map(({ x }) => (
                <Rule key={x} x={x} stroke="#2c2c2c" strokeDasharray="5 3" />
              ))}
              {sessionBreaks.map((x) => (
                <Rule key={x} x={x} stroke="#4a4a4a" strokeDasharray="9 4" />
              ))}
              {levels.map(({ y, color }) => (
                <Rule key={y} y={y} stroke={color} strokeDasharray="9 4" />
              ))}
              <polyline points={toPoints(upperBand)} stroke={blue} {...line} />
              <polyline points={toPoints(lowerBand)} stroke={blue} {...line} />
              <polyline points={toPoints(fastAverage)} stroke="#ff0000" {...line} />
              <polyline points={toPoints(slowAverage)} stroke={orange} {...line} />
              <TrendLine d="M4 187.5H309" color={orange} />
              <TrendLine d="M4 340L309 339" color={blue} />
              <TrendLine d="M659 385.5L875 380.5" color={orange} />
              <TrendLine d="M659 538.5L875 533.5" color={blue} />
              <TrendLine d="M964 341.5L1193 346.5" color={orange} />
              <TrendLine d="M964 485.5L1193 490.5" color={blue} />
              <Candles />
              <Arrow x1={1016} y1={313} x2={1448} y2={172} />
              <Rule x={crosshair.x} stroke="#666" strokeDasharray="5 3" />
              <Rule y={crosshair.y} stroke="#666" strokeDasharray="3 2" />
            </Drawings>
            <Studies>
              <li>* MXN A0-FX, MEXICO PESO - NEW COMPOSITE, 60, 17:00-17:00 (Dynamic)</li>
              <li>Bollinger Bands - MXN A0-FX, 60</li>
              <li>Moving Average - MXN A0-FX, 60</li>
            </Studies>
            <DataWindow>
              {readings.map(({ label, value, color }, i) => (
                <Reading key={i} $color={color} $heading={!value}>
                  <dt>{label}</dt>
                  {value && <dd>{value}</dd>}
                </Reading>
              ))}
            </DataWindow>
            {levels.map(({ y, text }) => (
              <LevelLabel key={y} style={{ top: pct(y, plot.priceTop, plot.priceHeight) }}>
                {text}
              </LevelLabel>
            ))}
            <Copyright>© eSignal, 2017</Copyright>
          </Plot>
          <Axis>
            {priceTicks.map(({ y, text }) => (
              <AxisLabel key={y} style={{ top: pct(y, plot.priceTop, plot.priceHeight) }}>
                {text}
              </AxisLabel>
            ))}
            {priceTags.map(({ y, text, bg, fg }) => (
              <AxisTag key={text} $bg={bg} $fg={fg} style={{ top: pct(y, plot.priceTop, plot.priceHeight) }}>
                {text}
              </AxisTag>
            ))}
          </Axis>
        </Pane>

        <PaneDivider />

        <TabStrip>
          <Tabs>
            {['MOM (10, C)', 'MACD (12, 26, C, 9, false, true)', 'Stoch (14, 1, 3)', 'ATR (14)', 'BandWidth'].map(
              (name, i) => (
                <Tab key={name} $active={i === 0}>
                  <TabButton>{name}</TabButton>
                  <CloseTab aria-label={`Close ${name}`}>
                    <svg width="9" height="9" viewBox="0 0 9 9" stroke={i === 0 ? '#ddd' : '#777'} strokeWidth="2" aria-hidden="true">
                      <path d="M1 1 8 8M8 1 1 8" />
                    </svg>
                  </CloseTab>
                </Tab>
              ),
            )}
            <TabRest />
          </Tabs>
          <TabCorner />
        </TabStrip>

        <Pane $grow={plot.momHeight} aria-label="Momentum">
          <Plot>
            <Drawings top={plot.momTop} height={plot.momHeight}>
              {momentumTicks.map(({ y, text }) => (
                <Rule key={y} y={y} stroke={text === '0.00' ? '#666' : '#2c2c2c'} strokeDasharray="5 3" />
              ))}
              {days.map(({ x }) => (
                <Rule key={x} x={x} stroke="#2c2c2c" strokeDasharray="5 3" />
              ))}
              <polyline points={toPoints(momentum)} stroke={blue} {...line} />
              <Arrow x1={1009} y1={810} x2={1539} y2={890} />
              <Rule x={crosshair.x} stroke="#666" strokeDasharray="5 3" />
            </Drawings>
            <Studies>
              <li>* Momentum - MXN A0-FX, 60</li>
            </Studies>
            <Annotation
              style={{
                left: pct(1427, plot.left, plot.width),
                top: pct(829, plot.momTop, plot.momHeight),
              }}
            >
              Divergencia Bajista
            </Annotation>
          </Plot>
          <Axis>
            {momentumTicks.map(({ y, text }) => (
              <AxisLabel key={y} style={{ top: pct(y, plot.momTop, plot.momHeight) }}>
                {text}
              </AxisLabel>
            ))}
            <AxisTag $wide $bg={blue} $fg="#ffffff" style={{ top: pct(907, plot.momTop, plot.momHeight) }}>
              0.02
            </AxisTag>
          </Axis>
        </Pane>

        <TimeRow>
          <TimeScale>
            {days.map(({ x, text, light }) => (
              <TimeLabel key={x} $light={light} style={{ left: pct(x, plot.left, plot.width) }}>
                {text}
              </TimeLabel>
            ))}
            <TimeTag style={{ left: pct(1713, plot.left, plot.width) }}>4:00 06/07/2017</TimeTag>
            <Mode>
              Dyn
              <LockButton aria-label="Lock scale">
                <svg width="22" height="21" viewBox="0 0 22 21" fill="none" aria-hidden="true">
                  <path d="M6 11V6Q6 2.5 9 2.5T12 6" stroke="#eee" strokeWidth="2" />
                  <path d="M4 10H13V19H4Z" fill="#ddd" />
                  <circle cx="15" cy="15" r="5" fill="#ddd" stroke="#707070" />
                  <path d="M15 12V15L17 16" stroke="#444" strokeWidth="1.5" />
                </svg>
              </LockButton>
            </Mode>
          </TimeScale>
          <TabCorner />
        </TimeRow>
      </Workspace>
    </Window>
  );
}
